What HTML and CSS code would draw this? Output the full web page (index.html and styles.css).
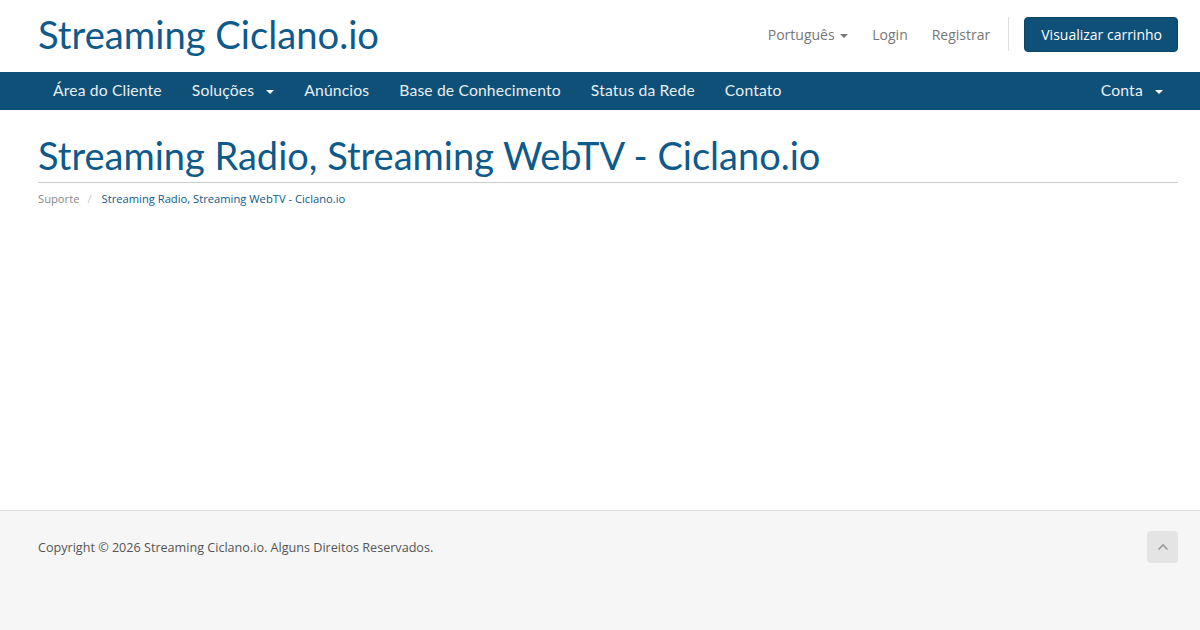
FILE: index.html
```html
<!DOCTYPE html>
<html lang="pt-BR">
<head>
    <meta charset="UTF-8">
    <title>Streaming Radio, Streaming WebTV - Ciclano.io</title>
    <link rel="stylesheet" href="styles.css">
</head>
<body>
    <header class="header">
        <div class="container header-inner">
            <a class="logo" href="#">Streaming Ciclano.io</a>
            <div class="top-links">
                <a href="#" class="top-link">Português <span class="caret caret-grey"></span></a>
                <a href="#" class="top-link">Login</a>
                <a href="#" class="top-link">Registrar</a>
                <span class="divider"></span>
                <a href="#" class="btn-cart">Visualizar carrinho</a>
            </div>
        </div>
    </header>

    <nav class="navbar">
        <div class="container navbar-inner">
            <ul class="nav">
                <li><a href="#">Área do Cliente</a></li>
                <li><a href="#">Soluções <span class="caret"></span></a></li>
                <li><a href="#">Anúncios</a></li>
                <li><a href="#">Base de Conhecimento</a></li>
                <li><a href="#">Status da Rede</a></li>
                <li><a href="#">Contato</a></li>
            </ul>
            <ul class="nav">
                <li><a href="#">Conta <span class="caret"></span></a></li>
            </ul>
        </div>
    </nav>

    <main class="main">
        <div class="container">
            <h1 class="page-title">Streaming Radio, Streaming WebTV - Ciclano.io</h1>
            <ol class="breadcrumb">
                <li><a href="#">Suporte</a></li>
                <li class="active">Streaming Radio, Streaming WebTV - Ciclano.io</li>
            </ol>
        </div>
    </main>

    <footer class="footer">
        <div class="container footer-inner">
            <p>Copyright © 2026 Streaming Ciclano.io. Alguns Direitos Reservados.</p>
            <a href="#" class="back-top" aria-label="Topo">
                <svg width="12" height="8" viewBox="0 0 12 8"><path d="M1.5 6.5 6 2l4.5 4.5" fill="none" stroke="#9a9a9a" stroke-width="1.6"/></svg>
            </a>
        </div>
    </footer>
</body>
</html>
```

FILE: styles.css
```css
* {
    box-sizing: border-box;
}

html, body {
    height: 100%;
}

body {
    margin: 0;
    font-family: "Open Sans", "Liberation Sans", sans-serif;
    font-size: 14px;
    color: #333;
    background: #fff;
    display: flex;
    flex-direction: column;
}

a {
    text-decoration: none;
}

.container {
    padding: 0 22px 0 38px;
}

/* header */
.header {
    height: 72px;
}

.header-inner {
    height: 100%;
    display: flex;
    align-items: center;
    justify-content: space-between;
    padding-bottom: 4px;
}

.logo {
    font-family: "Lato", sans-serif;
    font-weight: 400;
    font-size: 38.2px;
    color: #0e5a8a;
}

.top-links {
    display: flex;
    align-items: center;
}

.top-link {
    color: #777;
    font-size: 14px;
    margin-left: 24px;
}

.divider {
    width: 1px;
    height: 34px;
    background: #ddd;
    margin: 0 15px 0 18px;
}

.btn-cart {
    background: #0e5077;
    color: #fff;
    font-size: 14px;
    padding: 7px 15px 7px 16px;
    border-radius: 4px;
    border: 1px solid #0b4466;
}

.caret {
    display: inline-block;
    width: 0;
    height: 0;
    margin-left: 4px;
    vertical-align: middle;
    border-top: 4px solid #fff;
    border-left: 4px solid transparent;
    border-right: 4px solid transparent;
}

.caret-grey {
    border-top-color: #777;
    margin-left: 2px;
}

/* main navigation */
.navbar {
    background: #0e5077;
    height: 38px;
}

.navbar-inner {
    height: 100%;
    display: flex;
    justify-content: space-between;
}

.nav {
    list-style: none;
    margin: 0;
    padding: 0;
    display: flex;
}

.nav a {
    display: block;
    line-height: 36px;
    padding: 0 15px;
    color: #e8eef3;
    font-family: "Lato", sans-serif;
    font-size: 15.7px;
    letter-spacing: 0.15px;
}

.nav .caret {
    margin-left: 8px;
}

/* content */
.main {
    flex: 1;
    padding-top: 22px;
}

.page-title {
    font-family: "Lato", sans-serif;
    font-weight: 400;
    font-size: 38px;
    color: #0e5a8a;
    margin: 0;
    padding-bottom: 4px;
    border-bottom: 1px solid #ccc;
    line-height: 46px;
}

.breadcrumb {
    list-style: none;
    margin: 8px 0 0;
    padding: 0;
    display: flex;
    font-size: 11.2px;
}

.breadcrumb li + li::before {
    content: "/";
    color: #ccc;
    padding: 0 10px 0 8px;
}

.breadcrumb a {
    color: #888;
}

.breadcrumb .active {
    color: #0e5a8a;
}

/* footer */
.footer {
    height: 120px;
    background: #f6f6f6;
    border-top: 1px solid #ddd;
}

.footer-inner {
    display: flex;
    justify-content: space-between;
    align-items: center;
    padding-top: 20px;
}

.footer p {
    margin: 0;
    font-size: 12.6px;
    color: #555;
}

.back-top {
    width: 31px;
    height: 32px;
    background: #e4e4e4;
    border-radius: 4px;
    display: flex;
    align-items: center;
    justify-content: center;
}
```
